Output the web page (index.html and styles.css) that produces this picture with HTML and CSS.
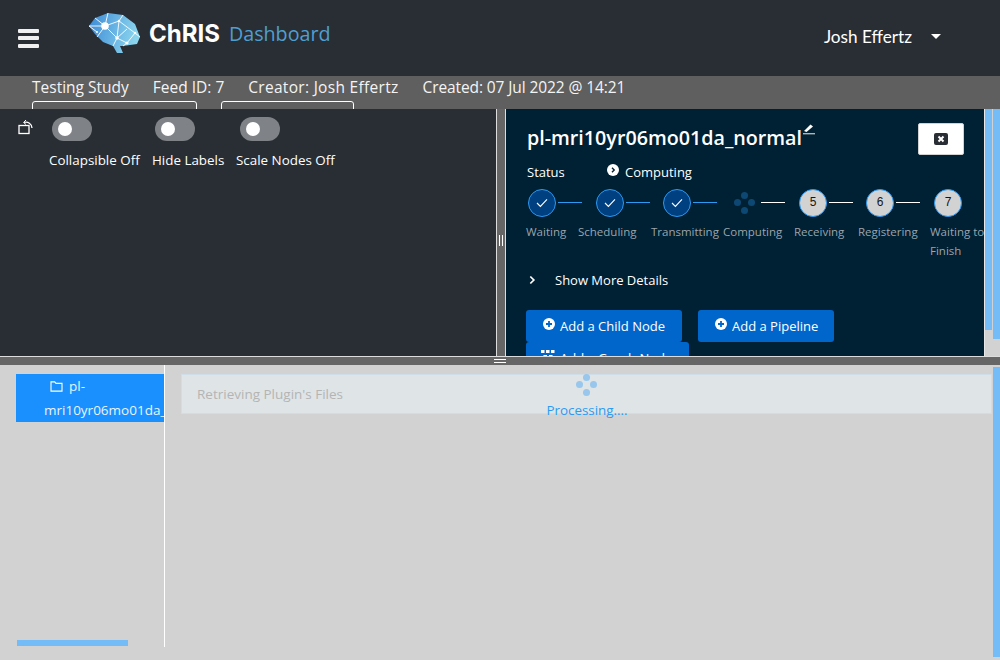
FILE: index.html
```html
<!DOCTYPE html>
<html lang="en">
<head>
<meta charset="utf-8">
<title>ChRIS Dashboard</title>
<link rel="stylesheet" href="styles.css">
</head>
<body>
<div class="app">
  <header class="masthead">
    <button class="burger" aria-label="Menu"><span></span><span></span><span></span></button>
    <div class="brand">
      <svg class="brain" viewBox="0 0 51 41" width="51" height="41">
        <defs><linearGradient id="bg" x1="0" y1="0" x2="1" y2="0.2"><stop offset="0" stop-color="#3c8ad6"/><stop offset="1" stop-color="#8ad4ee"/></linearGradient></defs>
        <path d="M0 13 L6 5 L19 0 L34 2 L46 11 L51 24 L48 31 L34 33 L31 33 L34 40 L28 40 L24 33 L14 29 L6 21 Z" fill="url(#bg)"/>
        <g stroke="#fff" stroke-width=".9" fill="none">
          <path d="M0 13 L16 13 L19 0 M16 13 L6 5 M16 13 L8 24 M16 13 L28 25 L24 33 M16 13 L30 8 L34 2 M30 8 L28 25 L38 30 L34 33 M38 30 L46 20 L51 24 M30 8 L46 20 M28 25 L38 16 M0 13 L8 19"/>
        </g>
        <g fill="#fff"><circle cx="16" cy="13" r="3.8"/><circle cx="28" cy="25" r="1.8"/><circle cx="38" cy="30" r="1.6"/><circle cx="30" cy="8" r="1.3"/><circle cx="46" cy="20" r="1.3"/><circle cx="8" cy="19" r="1"/></g>
      </svg>
      <span class="brand-name">ChRIS</span>
      <span class="brand-sub">Dashboard</span>
    </div>
    <div class="user">
      <span>Josh Effertz</span>
      <span class="caret"></span>
    </div>
  </header>

  <section class="infobar">
    <div class="info-line">
      <span>Testing Study</span>
      <span>Feed ID: 7</span>
      <span class="creator">Creator: Josh Effertz</span>
      <span class="created">Created: 07 Jul 2022 @ 14:21</span>
    </div>
    <div class="info-actions">
      <span class="ghost ghost-a"></span>
      <span class="ghost ghost-b"></span>
    </div>
  </section>

  <section class="split">
    <div class="graph">
      <svg class="rotate" viewBox="0 0 16 16" width="16" height="16" fill="none" stroke="#fff" stroke-width="1.3">
        <rect x="1" y="6.5" width="10" height="8"/>
        <path d="M6 3.5 A6 6 0 0 1 14 9"/><path d="M8 1 L5.6 3.5 L8 5.5" stroke-width="1"/>
      </svg>
      <div class="control ctl-a"><span class="switch"><i></i></span><label>Collapsible Off</label></div>
      <div class="control ctl-b"><span class="switch"><i></i></span><label>Hide Labels</label></div>
      <div class="control ctl-c"><span class="switch"><i></i></span><label>Scale Nodes Off</label></div>
    </div>
    <div class="gutter-v"><span class="grip-v"></span></div>
    <div class="detail">
      <div class="title-row">
        <h1>pl-mri10yr06mo01da_normal</h1>
        <svg class="pencil" viewBox="0 0 12 12" width="12" height="12"><path d="M1 8 L7.5 1.5 L10 3.5 L3.5 9 Z" fill="#fff"/><rect x="0" y="10" width="12" height="1.4" fill="#aeb4b9"/></svg>
        <button class="close-btn" aria-label="Close"><svg viewBox="0 0 14 12" width="14" height="12"><rect width="14" height="12" rx="2" fill="#292e34"/><path d="M4.5 3.5 L9.5 8.5 M9.5 3.5 L4.5 8.5" stroke="#fff" stroke-width="2"/></svg></button>
      </div>
      <div class="status-row">
        <span class="status-label">Status</span>
        <svg class="status-ico" viewBox="0 0 12 12" width="12" height="12"><circle cx="6" cy="6" r="6" fill="#fff"/><path d="M5 3.8 L7.2 6 L5 8.2" fill="none" stroke="#06202f" stroke-width="1.4"/></svg>
        <span>Computing</span>
      </div>
      <ol class="steps">
        <li class="step s1"><div class="track"><span class="dot done"><svg viewBox="0 0 12 10" width="12" height="10"><path d="M1 5 L4.4 8.4 L11 1.4" fill="none" stroke="#fff" stroke-width="1.1"/></svg></span><span class="line blue"></span></div><span class="cap">Waiting</span></li>
        <li class="step s2"><div class="track"><span class="dot done"><svg viewBox="0 0 12 10" width="12" height="10"><path d="M1 5 L4.4 8.4 L11 1.4" fill="none" stroke="#fff" stroke-width="1.1"/></svg></span><span class="line blue"></span></div><span class="cap">Scheduling</span></li>
        <li class="step s3"><div class="track"><span class="dot done"><svg viewBox="0 0 12 10" width="12" height="10"><path d="M1 5 L4.4 8.4 L11 1.4" fill="none" stroke="#fff" stroke-width="1.1"/></svg></span><span class="line blue"></span></div><span class="cap">Transmitting</span></li>
        <li class="step s4"><div class="track"><span class="spin"><b></b><b></b><b></b><b></b></span><span class="line"></span></div><span class="cap">Computing</span></li>
        <li class="step s5"><div class="track"><span class="dot todo">5</span><span class="line"></span></div><span class="cap">Receiving</span></li>
        <li class="step s6"><div class="track"><span class="dot todo">6</span><span class="line"></span></div><span class="cap">Registering</span></li>
        <li class="step s7"><div class="track"><span class="dot todo">7</span></div><span class="cap">Waiting to Finish</span></li>
      </ol>
      <div class="more">
        <svg viewBox="0 0 8 10" width="7" height="10"><path d="M1.5 1 L5.5 5 L1.5 9" fill="none" stroke="#fff" stroke-width="2"/></svg>
        <span>Show More Details</span>
      </div>
      <div class="actions">
        <button class="btn b-child"><svg viewBox="0 0 12 12" width="12" height="12"><circle cx="6" cy="6" r="6" fill="#fff"/><path d="M6 3 V9 M3 6 H9" stroke="#06c" stroke-width="1.8"/></svg>Add a Child Node</button>
        <button class="btn b-pipe"><svg viewBox="0 0 12 12" width="12" height="12"><circle cx="6" cy="6" r="6" fill="#fff"/><path d="M6 3 V9 M3 6 H9" stroke="#06c" stroke-width="1.8"/></svg>Add a Pipeline</button>
        <button class="btn b-graph"><svg viewBox="0 0 14 12" width="14" height="12" fill="#fff"><rect x="0" y="0" width="3.5" height="3"/><rect x="5" y="0" width="3.5" height="3"/><rect x="10" y="0" width="3.5" height="3"/><rect x="2.5" y="5" width="3.5" height="3"/><rect x="8" y="5" width="3.5" height="3"/></svg>Add a Graph Node</button>
      </div>
    </div>
    <div class="rail"><span class="thumb-a"></span><span class="thumb-b"></span></div>
  </section>

  <div class="gutter-h"><span class="grip-h"></span></div>

  <section class="files">
    <aside class="tree">
      <div class="tree-item">
        <div class="tree-first"><svg viewBox="0 0 14 12" width="13" height="11" fill="none" stroke="#fff" stroke-width="1.2"><path d="M1 1 H5 L6.5 2.6 H13 V11 H1 Z"/></svg><span>pl-</span></div>
        <div class="tree-second">mri10yr06mo01da_normal</div>
      </div>
      <div class="tree-scroll"></div>
    </aside>
    <div class="viewer">
      <div class="alert">Retrieving Plugin's Files</div>
      <div class="processing">
        <span class="spin light"><b></b><b></b><b></b><b></b></span>
        <span>Processing....</span>
      </div>
    </div>
    <div class="rail-b"></div>
  </section>
</div>
</body>
</html>
```
FILE: styles.css
```css
* { box-sizing: border-box; }
html, body { margin: 0; height: 100%; overflow: hidden; }
body { font-family: "Open Sans", "Noto Sans", sans-serif; font-size: 14px; color: #fff; background: #d2d2d2; }
.app { width: 1000px; height: 660px; display: flex; flex-direction: column; overflow: hidden; }

.masthead { height: 76px; flex: none; background: #292e34; display: flex; align-items: center; position: relative; }
.burger { width: 21px; height: 19px; margin: 0 0 0 18px; padding: 0; border: 0; background: none; display: flex; flex-direction: column; justify-content: space-between; }
.burger span { display: block; height: 4px; background: #f0f0f0; border-radius: 1px; }
.brand { display: flex; align-items: center; margin: -9px 0 0 50px; }
.brain { display: block; margin-right: 9px; }
.brand-name { font: 700 24px/1 "Inter", sans-serif; letter-spacing: 0; }
.brand-sub { font: 400 19.7px/1 "Open Sans", sans-serif; color: #4f9fd0; margin-left: 9px; }
.user { margin-left: auto; margin-right: 58px; display: flex; align-items: center; gap: 19px; font: 400 17.2px/1 "Lato", sans-serif; margin-top: -2px; }
.caret { width: 0; height: 0; margin-right: 1px; border: 5.5px solid transparent; border-top: 5.5px solid #fff; border-bottom: 0; }

.infobar { height: 33px; flex: none; background: #5f5f5f; padding: 0 0 0 32px; overflow: hidden; }
.info-line { display: flex; gap: 24px; font-size: 15.5px; line-height: 22px; color: #f4f4f4; }
.creator { letter-spacing: .3px; }
.created { letter-spacing: -.1px; }
.info-actions { display: flex; gap: 24px; margin-top: 3px; }
.ghost { display: block; height: 30px; border: 1px solid #fff; border-radius: 3px; }
.ghost-a { width: 165px; }
.ghost-b { width: 133px; }

.split { height: 247px; flex: none; display: flex; }
.graph { width: 496px; flex: none; background: #292e34; position: relative; }
.rotate { position: absolute; left: 18px; top: 10px; }
.control { position: absolute; top: 8px; display: flex; flex-direction: column; align-items: flex-start; font-size: 13.4px; }
.ctl-a { left: 49px; }
.ctl-b { left: 152px; }
.ctl-c { left: 236px; }
.control label { margin-top: 9px; line-height: 20px; white-space: nowrap; }
.switch { width: 40px; height: 24px; margin-left: 3px; border-radius: 12px; background: #7f8387; display: block; padding: 5px 6px; }
.ctl-c .switch { margin-left: 4px; }
.switch i { display: block; width: 14px; height: 14px; border-radius: 50%; background: #fff; }
.gutter-v { width: 10px; flex: none; background: #666; border-left: 1px solid #ddd; border-right: 1px solid #ddd; display: flex; align-items: center; justify-content: center; }
.grip-v { width: 4px; height: 11px; border-left: 1px solid #fff; border-right: 1px solid #fff; margin-top: 15px; }
.detail { width: 478px; flex: none; background: #002033; overflow: hidden; padding: 14px 0 0 20px; }
.title-row { display: flex; align-items: flex-start; height: 35px; }
.title-row h1 { margin: 0 0 0 1px; font: 600 19.7px/30px "Open Sans", sans-serif; }
.pencil { margin: 0 0 0 1px; }
.close-btn { margin: 0 0 0 auto; margin-right: 20px; width: 46px; height: 32px; background: #fff; border: 1px solid #d2d2d2; border-radius: 2px; padding: 0; display: flex; align-items: center; justify-content: center; }
.status-row { display: flex; align-items: center; height: 22px; margin-top: 3px; font-size: 13px; }
.status-label { width: 80px; margin-left: 1px; }
.status-ico { margin: -4px 6px 0 0; }
.steps { list-style: none; margin: 6px 0 0; padding: 0; position: relative; height: 81px; }
.step { position: absolute; top: 0; width: 72px; }
.s1 { left: 0; }
.s2 { left: 68px; }
.s3 { left: 135px; }
.s4 { left: 203px; }
.s5 { left: 271px; }
.s6 { left: 338px; }
.s7 { left: 406px; }
.track { display: flex; align-items: center; height: 28px; padding-left: 2px; }
.dot { width: 28px; height: 28px; border-radius: 50%; border: 1px solid #2b9af3; flex: none; display: flex; align-items: center; justify-content: center; font: 400 12px/1 "Liberation Sans", sans-serif; padding-bottom: 2px; }
.done { background: #004080; padding-bottom: 0; }
.todo { background: #d2d2d2; color: #151515; }
.line { width: 24px; height: 1px; background: #fff; margin: -1px 0 0 2px; flex: none; }
.line.blue { background: #2b9af3; }
.spin { width: 24px; height: 24px; margin: 0 2px; position: relative; display: block; flex: none; }
.spin b { position: absolute; width: 7px; height: 7px; border-radius: 50%; background: #0d4874; }
.spin b:nth-child(1) { left: 8px; top: 1px; }
.spin b:nth-child(2) { left: 1px; top: 8px; }
.spin b:nth-child(3) { left: 15px; top: 8px; }
.spin b:nth-child(4) { left: 8px; top: 16px; }
.cap { display: block; margin-top: 5px; font-size: 11.5px; line-height: 19px; color: #9aa5ad; white-space: nowrap; }
.s1 .cap { margin-left: 0; }
.s2 .cap { margin-left: -16px; }
.s3 .cap { margin-left: -10px; }
.s4 .cap { margin-left: -6px; }
.s5 .cap { margin-left: -3px; }
.s6 .cap { margin-left: -6px; }
.s7 .cap { white-space: normal; width: 58px; margin-left: -2px; }
.more { display: flex; align-items: center; height: 20px; font-size: 13px; padding-left: 3px; }
.more span { margin-left: 19px; }
.actions { position: relative; height: 90px; margin-top: 20px; }
.btn { position: absolute; height: 32px; border: 0; border-radius: 3px; background: #06c; color: #fff; font: 400 13px/1 "Open Sans", sans-serif; display: flex; align-items: center; gap: 5px; padding: 0 0 0 17px; white-space: nowrap; }
.btn svg { margin-top: -4px; }
.b-child { left: 0; top: 0; width: 156px; }
.b-pipe { left: 172px; top: 0; width: 136px; }
.b-graph { left: 0; top: 32px; width: 163px; padding-left: 15px; }
.rail { width: 16px; flex: none; background: #d2d2d2; position: relative; border-left: 1px solid #e8e8e8; }
.thumb-a { position: absolute; left: 0; top: 0; width: 7px; height: 221px; background: #73bcf7; }
.thumb-b { position: absolute; left: 8px; top: 0; width: 7px; height: 230px; background: #73bcf7; }

.gutter-h { height: 9px; flex: none; background: #666; border-top: 1px solid #ddd; position: relative; }
.grip-h { position: absolute; left: 494px; top: 2px; width: 12px; height: 4px; border-top: 1px solid #fff; border-bottom: 1px solid #fff; }

.files { flex: 1; display: flex; background: #d2d2d2; position: relative; min-height: 0; }
.tree { width: 165px; height: 282px; flex: none; border-right: 1px solid #fff; padding: 9px 0 0 16px; position: relative; }
.tree-item { width: 148px; height: 48px; background: #1a90ff; overflow: hidden; font-size: 13.5px; line-height: 24px; color: #e8f4ff; }
.tree-first { display: flex; align-items: center; gap: 6px; padding-left: 34px; }
.tree-second { padding-left: 28px; white-space: nowrap; }
.tree-scroll { position: absolute; left: 17px; top: 275px; width: 111px; height: 6px; background: #73bcf7; }
.viewer { flex: 1; position: relative; padding: 9px 8px 0 16px; }
.alert { height: 40px; background: #dfe4e7; border: 1px solid #cfdde9; padding-left: 15px; font-size: 13.5px; line-height: 38px; color: #b4b4b4; }
.processing { position: absolute; left: 382px; top: 8px; display: flex; flex-direction: column; align-items: center; font-size: 13.4px; color: #2b9af3; gap: 4px; width: 80px; white-space: nowrap; }
.spin.light b { background: #98c6ec; }
.rail-b { position: absolute; right: 0; top: 2px; width: 7px; height: 290px; background: #73bcf7; }
```
